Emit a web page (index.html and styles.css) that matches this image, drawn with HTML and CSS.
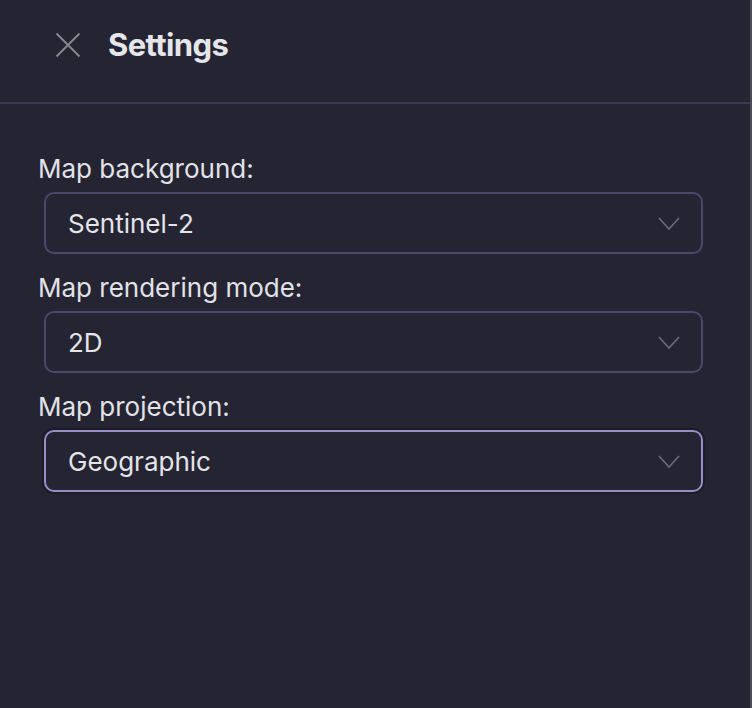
FILE: index.html
```html
<!DOCTYPE html>
<html>
<head>
<meta charset="utf-8">
<link rel="stylesheet" href="styles.css">
</head>
<body>
<div class="panel">
  <div class="header">
    <svg class="close" width="26" height="26" viewBox="0 0 26 26"><path d="M1.5 1.5 L24.5 24.5 M24.5 1.5 L1.5 24.5" stroke="#86868c" stroke-width="2" fill="none"/></svg>
    <h1 class="title">Settings</h1>
  </div>
  <div class="content">
    <div class="field">
      <div class="label">Map background:</div>
      <div class="select">
        <span class="value">Sentinel-2</span>
        <svg class="chev" width="22" height="13" viewBox="0 0 22 13"><path d="M1 1 L11 12 L21 1" stroke="#6c6c7c" stroke-width="1.6" fill="none"/></svg>
      </div>
    </div>
    <div class="field">
      <div class="label">Map rendering mode:</div>
      <div class="select">
        <span class="value">2D</span>
        <svg class="chev" width="22" height="13" viewBox="0 0 22 13"><path d="M1 1 L11 12 L21 1" stroke="#6c6c7c" stroke-width="1.6" fill="none"/></svg>
      </div>
    </div>
    <div class="field">
      <div class="label">Map projection:</div>
      <div class="select focused">
        <span class="value">Geographic</span>
        <svg class="chev" width="22" height="13" viewBox="0 0 22 13"><path d="M1 1 L11 12 L21 1" stroke="#6c6c7c" stroke-width="1.6" fill="none"/></svg>
      </div>
    </div>
  </div>
</div>
</body>
</html>
```
FILE: styles.css
```css
html, body {
  margin: 0;
  padding: 0;
  background: #242432;
}
.panel {
  width: 750px;
  height: 708px;
  background: #242432;
  border-right: 2px solid #4b4b56;
  font-family: Inter, Roboto, "Liberation Sans", sans-serif;
  color: #e4e4e9;
}
.header {
  height: 104px;
  box-sizing: border-box;
  border-bottom: 2px solid #3c3b50;
  display: flex;
  align-items: center;
  padding: 0 0 12px 55px;
  gap: 27px;
}
.close {
  display: block;
  flex: none;
}
.title {
  margin: 0;
  font-size: 31px;
  line-height: 40px;
  letter-spacing: -0.6px;
  font-weight: 700;
  color: #e6e6ea;
}
.content {
  padding: 49px 0 0 38px;
  display: flex;
  flex-direction: column;
  gap: 18px;
}
.field {
  display: flex;
  flex-direction: column;
  gap: 7px;
}
.label {
  font-size: 26px;
  line-height: 32px;
  color: #e2e2e7;
}
.select {
  margin-left: 6px;
  width: 659px;
  height: 62px;
  box-sizing: border-box;
  border: 2px solid #49486a;
  border-radius: 10px;
  display: flex;
  align-items: center;
  justify-content: space-between;
  padding: 0 21px 0 22px;
}
.select.focused {
  border-color: #9a8cc9;
  box-shadow: 0 0 0 2px rgba(20, 20, 28, 0.5);
}
.value {
  font-size: 26px;
  color: #e4e4e9;
}
.chev {
  display: block;
}
```
